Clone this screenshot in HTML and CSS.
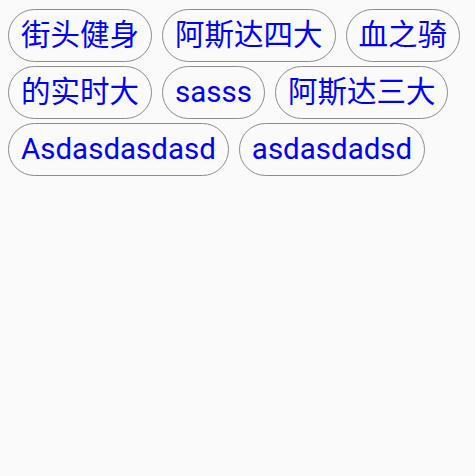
FILE: index.html
```html
<!DOCTYPE html>
<html>
<head>
<meta charset="utf-8">
<link rel="stylesheet" href="styles.css">
</head>
<body>
<div class="tags">
  <span class="tag">街头健身</span>
  <span class="tag">阿斯达四大</span>
  <span class="tag">血之骑</span>
  <span class="tag">的实时大</span>
  <span class="tag">sasss</span>
  <span class="tag">阿斯达三大</span>
  <span class="tag">Asdasdasdasd</span>
  <span class="tag">asdasdadsd</span>
</div>
</body>
</html>
```
FILE: styles.css
```css
html, body {
  margin: 0;
  padding: 0;
  background: #fafafa;
  width: 475px;
  height: 476px;
}
.tags {
  display: flex;
  flex-wrap: wrap;
  align-items: flex-start;
  gap: 4px 10px;
  padding: 9px 8px;
}
.tag {
  display: block;
  box-sizing: border-box;
  height: 53px;
  padding: 8px 12px;
  border: 1px solid #8c8c8c;
  border-radius: 27px;
  font-family: Roboto, "Noto Sans CJK SC", sans-serif;
  font-size: 29.5px;
  line-height: 35px;
  color: #0000ff;
  white-space: nowrap;
}
```
